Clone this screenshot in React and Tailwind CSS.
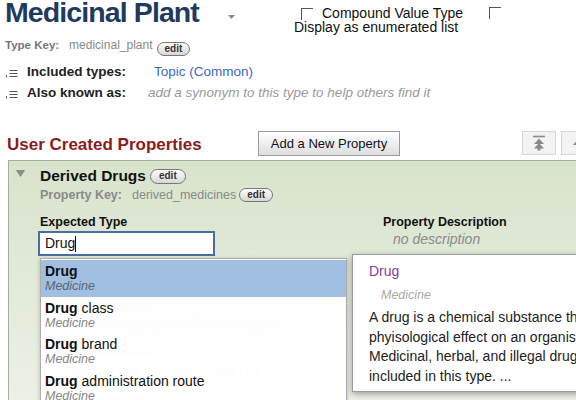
import React from "react";

function Pill({ className = "" }) {
  return (
    <span
      className={
        "inline-flex shrink-0 items-center justify-center h-[14px] px-[7px] rounded-full border border-[#777] bg-gradient-to-b from-white to-[#d6d6d6] text-[10px] leading-none font-bold text-[#333] " +
        className
      }
    >
      edit
    </span>
  );
}

function Box({ className = "" }) {
  return (
    <span
      className={
        "block shrink-0 w-[12px] h-[12px] border-t-[1.5px] border-l-[1.5px] border-t-[#555] border-l-[#555] " +
        className
      }
    />
  );
}

function ListIcon() {
  return (
    <svg width="13" height="11" viewBox="0 0 13 11" className="mt-[3px] shrink-0">
      <path d="M1.5 8.2v2.3" stroke="#555" strokeWidth="1.1" />
      <path d="M4.5 3.5h8M4.5 6.5h8M4.5 9.5h8" stroke="#555" strokeWidth="1.1" />
    </svg>
  );
}

function TopIcon() {
  return (
    <svg width="14" height="16" viewBox="0 0 14 16">
      <path d="M1 1.5h12" stroke="#8a8a8a" strokeWidth="1.6" />
      <path d="M7 3.5L2 9h10z" fill="#8a8a8a" />
      <path d="M7 8L2 13.5h10z" fill="#8a8a8a" />
      <path d="M5.5 13h3v2.5h-3z" fill="#8a8a8a" />
    </svg>
  );
}

const items = [
  ["", "Medicine"],
  [" class", "Medicine"],
  [" brand", "Medicine"],
  [" administration route", "Medicine"],
];

export default function App() {
  return (
    <div className="w-[576px] h-[400px] overflow-hidden bg-white font-['Liberation_Sans',Arial,sans-serif] text-[#222]">
      {/* header */}
      <div className="flex h-[38px]">
        <div className="w-[223px] shrink-0 pl-[5px] mt-[-2.5px] text-[28.5px] leading-[28px] font-bold tracking-[-0.9px] text-[#1f3a5f] whitespace-nowrap">
          Medicinal Plant
        </div>
        <div className="w-[71px] shrink-0 pt-[15px] pl-[5px]">
          <svg width="7" height="4" viewBox="0 0 7 4">
            <path d="M0 0h7L3.5 4z" fill="#8a8a8a" />
          </svg>
        </div>
        <div className="w-[195px] shrink-0 pt-[6px] text-[14px] leading-[14.4px] text-[#111] whitespace-nowrap">
          <div className="flex items-start">
            <Box className="ml-[7px] mr-[9px] mt-[2px]" />
            <span>Compound Value Type</span>
          </div>
          <div>Display as enumerated list</div>
        </div>
        <div className="pt-[7px]">
          <Box />
        </div>
      </div>

      {/* type key */}
      <div className="flex items-start h-[14px] pl-[5px] mt-[-0.5px] whitespace-nowrap">
        <span className="text-[11.5px] leading-[14px] font-bold text-[#777]">Type Key:</span>
        <span className="ml-[10px] text-[12px] leading-[14px] text-[#888]">medicinal_plant</span>
        <Pill className="ml-[4px] mt-[4px] h-[13px]" />
      </div>

      {/* included types */}
      <div className="flex items-start pl-[5px] mt-[12.5px] text-[13.5px] leading-[16px] whitespace-nowrap">
        <ListIcon />
        <span className="ml-[9px] font-bold text-[#222]">Included types:</span>
        <span className="ml-[28px] text-[#3a6bc4]">Topic (Common)</span>
      </div>
      <div className="flex items-start pl-[5px] mt-[5px] text-[13.5px] leading-[16px] whitespace-nowrap">
        <ListIcon />
        <span className="ml-[9px] font-bold text-[#222]">Also known as:</span>
        <span className="ml-[22px] italic text-[#9a9a9a]">add a synonym to this type to help others find it</span>
      </div>

      {/* section heading */}
      <div className="flex items-start h-[25px] mt-[30px] whitespace-nowrap">
        <div className="w-[258px] shrink-0 pl-[7px] mt-[3.5px] text-[17px] leading-[20px] font-bold text-[#8a1c1c]">
          User Created Properties
        </div>
        <div className="h-[25px] w-[142px] shrink-0 flex items-center justify-center border border-[#9a9a9a] bg-gradient-to-b from-white to-[#dedede] text-[13px] text-[#111]">
          Add a New Property
        </div>
        <div className="ml-[122px] shrink-0 h-[24px] w-[34px] flex items-center justify-center border border-[#d6d6d6] bg-[#f3f3f3]">
          <TopIcon />
        </div>
        <div className="ml-[5px] shrink-0 h-[24px] w-[34px] flex items-center justify-center border border-[#d6d6d6] bg-[#f3f3f3]">
          <svg width="14" height="16" viewBox="0 0 14 16">
            <path d="M7 4L2 10h10z" fill="#8a8a8a" />
          </svg>
        </div>
      </div>

      {/* property panel */}
      <div className="relative ml-[8px] mt-[4px] w-[620px] h-[260px] border border-[#a3b296] bg-gradient-to-b from-[#d8e3cc] to-[#eef2e7]">
        <div className="flex">
          <div className="w-[31px] shrink-0 pl-[7px] pt-[9px]">
            <svg width="9" height="7" viewBox="0 0 9 7">
              <path d="M0.5 0.5h8L4.5 6.5z" fill="#8d8d8d" stroke="#777" strokeWidth="0.6" />
            </svg>
          </div>
          <div className="flex-1 pt-[6px]">
            <div className="flex items-center whitespace-nowrap">
              <span className="text-[15.5px] leading-[18px] font-bold text-[#111]">Derived Drugs</span>
              <Pill className="ml-[4px] px-[8px] h-[15px]" />
            </div>
            <div className="flex items-center mt-[2.5px] text-[12.5px] leading-[15px] text-[#8a8a8a] whitespace-nowrap">
              <span className="font-bold">Property Key:</span>
              <span className="ml-[10px]">derived_medicines</span>
              <Pill className="ml-[3px]" />
            </div>

            <div className="flex mt-[12px]">
              <div className="w-[343px] shrink-0">
                <div className="text-[12.5px] leading-[15px] font-bold text-[#111]">Expected Type</div>
                <div className="ml-[-2px] mt-[1.5px] w-[177px] h-[25px] border-2 border-[#4a6da6] bg-white flex items-center pl-[5px] text-[14px] text-[#111]">
                  Drug
                  <span className="w-[1px] h-[16px] bg-black" />
                </div>
                {/* content underneath the dropdown */}
                <div className="mt-[6px] flex gap-[8px] text-[13px] text-[#c4c4c4] whitespace-nowrap">
                  <span className="h-[22px] w-[60px] border border-[#d4d4d4] flex items-center justify-center">Save</span>
                  <span className="h-[22px] w-[58px] border border-[#d4d4d4] flex items-center justify-center">Cancel</span>
                </div>
                <div className="mt-[14px] ml-[65px] text-[14px] leading-[16px] text-[#c8c8c8]">Custom</div>
                <div className="mt-[2px] ml-[60px] text-[14px] leading-[16px] text-[#c8c8c8] whitespace-nowrap">✓ display in default template</div>
                <div className="mt-[10px] ml-[40px] text-[14px] leading-[16px] text-[#c8c8c8]">Presentation</div>
                <div className="mt-[6px] ml-[30px] flex gap-[30px] text-[14px] leading-[16px] text-[#c8c8c8] whitespace-nowrap">
                  <span>Vertical List</span>
                  <span>Horizontal List</span>
                </div>
                <div className="mt-[12px] ml-[40px] text-[14px] leading-[16px] text-[#c8c8c8] whitespace-nowrap">Limit to one value</div>
              </div>
              <div className="flex-1">
                <div className="text-[12.5px] leading-[15px] font-bold text-[#111] whitespace-nowrap">Property Description</div>
                <div className="ml-[10px] mt-[1px] text-[14px] leading-[16px] italic text-[#8a8a8a]">no description</div>
                <Pill className="ml-[10px] mt-[2px]" />
                <div className="ml-[24px] mt-[4px] text-[13px] leading-[15px] text-[#c8c8c8] whitespace-nowrap">
                  You can use this space to help<br />others learn about this property
                </div>
              </div>
            </div>
          </div>
        </div>

        {/* autocomplete dropdown */}
        <div className="absolute left-[31px] top-[97px] w-[307px] h-[160px] border border-[#aeaeae] bg-white/[0.95] shadow-[0_1px_4px_rgba(0,0,0,0.25)] pt-[1px]">
          {items.map(([rest, sub], i) => (
            <div
              key={i}
              className={
                "h-[36.5px] pl-[4px] pt-[4px] whitespace-nowrap " +
                (i === 0 ? "bg-[#9dbcdf]/[0.96]" : "")
              }
            >
              <div className="text-[14px] leading-[15px] text-[#111]">
                <span className="font-bold">Drug</span>
                {rest}
              </div>
              <div className={"text-[12.5px] leading-[15px] italic " + (i === 0 ? "text-[#58677c]" : "text-[#888]")}>
                {sub}
              </div>
            </div>
          ))}
        </div>

        {/* description popup */}
        <div className="absolute left-[343px] top-[93px] w-[300px] h-[138px] border border-[#9c9c9c] bg-white shadow-[0_2px_6px_rgba(0,0,0,0.35)] pl-[16px] pt-[8px] whitespace-nowrap">
          <div className="text-[14px] leading-[16px] text-[#8b3a9e]">Drug</div>
          <div className="ml-[12px] mt-[9px] text-[12.5px] leading-[15px] italic text-[#aaa]">Medicine</div>
          <div className="mt-[5px] text-[14px] leading-[19.5px] text-[#222]">
            A drug is a chemical substance that has a<br />
            phyisological effect on an organism.<br />
            Medicinal, herbal, and illegal drugs are<br />
            included in this type. ...
          </div>
        </div>
      </div>
    </div>
  );
}
